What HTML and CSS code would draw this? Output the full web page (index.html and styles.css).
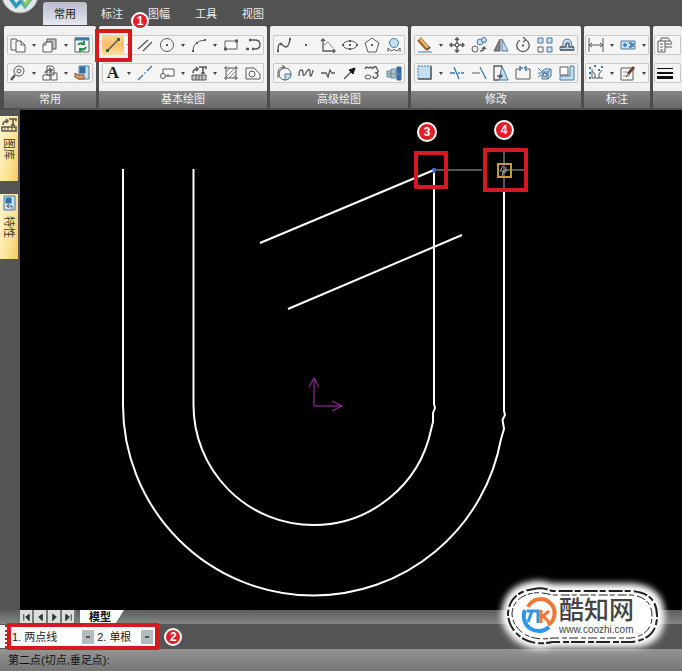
FILE: index.html
```html
<!DOCTYPE html>
<html lang="zh-CN">
<head>
<meta charset="utf-8">
<title>CAD</title>
<link rel="stylesheet" href="styles.css">
</head>
<body>
<header class="top">
  <svg class="app-logo" viewBox="0 0 38 14" aria-hidden="true"><circle cx="19" cy="-5" r="18" fill="#e4e7ea" stroke="#999"/><path d="M9-2l6 8 5-5 4 5 7-9" fill="none" stroke="#54b9a0" stroke-width="4"/><path d="M9-2l6 8 5-5" fill="none" stroke="#2c93c5" stroke-width="3"/><path d="M24 5l7-9" stroke="#9bc94c" stroke-width="3"/></svg>
  <nav class="tabs">
    <button class="tab active">常用</button><button class="tab">标注</button><button class="tab">图幅</button><button class="tab">工具</button><button class="tab">视图</button>
  </nav>
</header>

<section class="ribbon">
  <div class="panel">
    <div class="row">
      <button class="tool" aria-label="新建"><svg viewBox="0 0 16 16"><path d="M1 2h5l2 2v9H1z"/><path class="f" d="M6 4h5l4 4v7H6z"/><path d="M11 4v4h4"/></svg></button><i class="caret"></i>
      <button class="tool" aria-label="复制"><svg viewBox="0 0 16 16"><path class="shade" d="M5 5V2h9v10h-4V5z"/><path class="g" d="M8 5l2-3"/><path class="f" d="M1 7l3-2h6v10H1z"/><path d="M4 5v3H1"/></svg></button><i class="caret"></i>
      <button class="tool" aria-label="刷新"><svg viewBox="0 0 16 16"><path class="f" d="M1 1h14v14H1z"/><path class="bs" d="M1 2h14" stroke-width="3"/><path class="gr" d="M4 8q2-3 6-1M12 10q-2 4-6 2M10 4v3H7M6 15v-3h3"/></svg></button>
    </div>
    <div class="row">
      <button class="tool" aria-label="缩放"><svg viewBox="0 0 16 16"><circle cx="9" cy="6" r="5"/><circle cx="9" cy="6" r="2"/><path d="M5 10l-4 5" stroke-width="2.5"/></svg></button><i class="caret"></i>
      <button class="tool" aria-label="粘贴"><svg viewBox="0 0 16 16"><path class="f" d="M5 1h5l2 2v7H5zM1 10h7v5H1zM9 8h6v7H9z"/><path d="M3 8q1-3 6-3M7 3l3 2-3 3" stroke-width="1.5"/></svg></button><i class="caret"></i>
      <button class="tool" aria-label="特性刷"><svg viewBox="0 0 16 16"><path class="b" d="M5 1h10v13H5z"/><path class="deep" d="M6 2h5v6H6z"/><path class="hand" d="M1 8l3 2h6v4H4l-3-2z"/></svg></button>
    </div>
    <div class="caption">常用</div>
  </div>

  <div class="panel">
    <div class="row">
      <button class="tool selected" aria-label="直线"><svg viewBox="0 0 16 16"><path d="M2 14L14 2" stroke-width="1.6"/><path class="knob" d="M1 12h3v3H1zM12 1h3v3h-3z"/></svg></button><i class="caret"></i>
      <button class="tool" aria-label="平行线"><svg viewBox="0 0 16 16"><path d="M1 12L11 3M6 14l9-9" stroke-width="1.4"/></svg></button>
      <button class="tool" aria-label="圆"><svg viewBox="0 0 16 16"><circle cx="8" cy="8" r="6.5"/><path d="M7 8h2" stroke-width="2"/></svg></button><i class="caret"></i>
      <button class="tool" aria-label="圆弧"><svg viewBox="0 0 16 16"><path d="M2 14Q2 4 14 3"/><path d="M1 14h2M5 6h2M13 3h2" stroke-width="2"/></svg></button><i class="caret"></i>
      <button class="tool" aria-label="矩形"><svg viewBox="0 0 16 16"><path class="f" d="M2 4h12v8H2z"/><path d="M1 12h3M12 4h3" stroke-width="3"/></svg></button>
      <button class="tool" aria-label="多段线"><svg viewBox="0 0 16 16"><path d="M5 3h5q5 0 5 4.500t-5 4.500H8" stroke-width="1.4"/><path d="M4 3h2M1 12h3M7 12h2" stroke-width="2.500"/></svg></button>
    </div>
    <div class="row">
      <button class="tool" aria-label="文字"><b class="letter">A</b></button><i class="caret"></i>
      <button class="tool" aria-label="中心线"><svg viewBox="0 0 16 16"><path class="bs" d="M1 15l5-5M7.500 8.500l1-1M10 6l5-5" stroke-width="1.4"/></svg></button>
      <button class="tool" aria-label="轮廓"><svg viewBox="0 0 16 16"><path class="f" d="M4 4h11v7H6"/><circle cx="4" cy="11" r="2.5"/><path d="M4 4v5M9 9v3"/></svg></button><i class="caret"></i>
      <button class="tool" aria-label="图库"><svg viewBox="0 0 16 16"><path d="M2 8q0-4 4-4M5 2l2 2-2 2M8 2h7v2M12 2v7M10 8h4" stroke-width="1.6"/><path class="shade" d="M1 10h14v5H1z"/><path d="M5 10v5M8 10v5M11 10v5"/></svg></button><i class="caret"></i>
      <button class="tool" aria-label="剖面线"><svg viewBox="0 0 16 16"><path class="g" d="M3 7l4-4M3 12l9-9M6 13l7-7M10 13l3-3"/><path d="M3 1v14M13 1v14M1 3h14M1 13h14"/></svg></button>
      <button class="tool" aria-label="填充"><svg viewBox="0 0 16 16"><path d="M1 3h8l6 6v5H1z"/><circle cx="7" cy="9" r="3"/></svg></button>
    </div>
    <div class="caption">基本绘图</div>
  </div>

  <div class="panel">
    <div class="row">
      <button class="tool" aria-label="样条"><svg viewBox="0 0 16 16"><path d="M2 14C2 3 6 7 8 9s5 1 6-7" stroke-width="1.4"/><path d="M1 14h2M4 7h2M13 2h2" stroke-width="2.5"/></svg></button>
      <button class="tool" aria-label="点"><svg viewBox="0 0 16 16"><path d="M7 8h2" stroke-width="2"/></svg></button>
      <button class="tool" aria-label="公式曲线"><svg viewBox="0 0 16 16"><path d="M3 2v12h12M1 4l2-2 2 2M13 12l2 2-2 2" stroke-width="1.3"/><path class="g" d="M3 9l5-4 5 6"/></svg></button>
      <button class="tool" aria-label="椭圆"><svg viewBox="0 0 16 16"><ellipse cx="8" cy="8" rx="7" ry="4"/><path d="M7 4h2M7 12h2M7 8h2M0 8h2M14 8h2" stroke-width="2"/></svg></button>
      <button class="tool" aria-label="多边形"><svg viewBox="0 0 16 16"><path d="M8 1l7 5-3 9H4L1 6z"/><path d="M7 8h2" stroke-width="2"/></svg></button>
      <button class="tool" aria-label="圆孔"><svg viewBox="0 0 16 16"><circle class="b" cx="8" cy="6" r="4.5"/><path d="M2 15v-4l3 3q3-3 6 0l3-3v4"/></svg></button>
    </div>
    <div class="row">
      <button class="tool" aria-label="局部放大"><svg viewBox="0 0 16 16"><circle cx="9" cy="9" r="6"/><path class="b" d="M9 9h6q0 5-6 6z"/><path d="M2 7q1-5 6-5M6 0l3 2-3 2M2 7v6"/></svg></button>
      <button class="tool" aria-label="波浪线"><svg viewBox="0 0 16 16"><path d="M1 11Q1 5 3 5t2 3 1.500 2T8 8t2-3 2 3 1.500 2T15 5" stroke-width="1.300"/></svg></button>
      <button class="tool" aria-label="折断线"><svg viewBox="0 0 16 16"><path d="M1 8h5l2 4 2-7 2 3h3" stroke-width="1.3"/></svg></button>
      <button class="tool" aria-label="箭头"><svg viewBox="0 0 16 16"><path d="M2 14l8-8" stroke-width="1.500"/><path class="ink" d="M13 3L7 5l4 4z"/></svg></button>
      <button class="tool" aria-label="云线"><svg viewBox="0 0 16 16"><path d="M1 4q1-3 4-1 2-2 4 1M9 3q3-3 4 1 3 3-1 4 4 2 0 5-3 1-3-2" stroke-width="1.4"/><ellipse cx="4" cy="12" rx="3" ry="2"/></svg></button>
      <button class="tool" aria-label="孔轴"><svg viewBox="0 0 16 16"><path class="bar" d="M1 6h4v6H1z"/><path class="bar" d="M5 4h5v9H5z"/><path class="deep" d="M11 2h4v13h-4z"/><path class="g" d="M1 9h14"/></svg></button>
    </div>
    <div class="caption">高级绘图</div>
  </div>

  <div class="panel">
    <div class="row">
      <button class="tool" aria-label="删除"><svg viewBox="0 0 16 16"><path class="wood" d="M2 2l9 10"/><path class="shine" d="M3 2l8 9"/><path d="M10 13l3-3" stroke-width="2"/><path class="bs" d="M1 15h14"/></svg></button><i class="caret"></i>
      <button class="tool" aria-label="平移"><svg viewBox="0 0 16 16"><path d="M8 1v14M1 8h14M6 3l2-2 2 2M6 13l2 2 2-2M3 6L1 8l2 2M13 6l2 2-2 2" stroke-width="1.5"/><path class="f" d="M6.500 6.500h3v3h-3z"/></svg></button>
      <button class="tool" aria-label="平移复制"><svg viewBox="0 0 16 16"><circle class="b" cx="9" cy="5" r="3"/><circle class="b" cx="13" cy="3" r="2.5"/><circle cx="4" cy="12" r="3"/><path d="M9 14q4 0 4-3M11 12l2-2 2 2" stroke-width="1.4"/></svg></button>
      <button class="tool" aria-label="镜像"><svg viewBox="0 0 16 16"><path class="slate" d="M7 2v12H1z"/><path class="b" d="M9 2v12h6z"/></svg></button>
      <button class="tool" aria-label="旋转"><svg viewBox="0 0 16 16"><path d="M5 3a6.200 6.200 0 1 0 6 0M8 0l3 3-3 2" stroke-width="1.300"/><path d="M7 8.500h2" stroke-width="2"/></svg></button>
      <button class="tool" aria-label="阵列"><svg viewBox="0 0 16 16"><path class="b" d="M1 1h5v5H1zM10 1h5v5h-5zM10 10h5v5h-5z"/><path class="f" d="M1 10h5v5H1z"/></svg></button>
      <button class="tool" aria-label="等距线"><svg viewBox="0 0 16 16"><path class="b" d="M1 13v-3h3q-1-8 4-8t5 8h2v3z"/><path d="M1 10h6V7q2-2 3 0v3h5M1 13h14" stroke-width="1.4"/></svg></button>
    </div>
    <div class="row">
      <button class="tool" aria-label="裁剪"><svg viewBox="0 0 16 16"><path class="b" d="M1 1h13v13H1z" stroke-dasharray="2 1"/><path d="M14 1v13H1" stroke-width="1.5"/></svg></button><i class="caret"></i>
      <button class="tool" aria-label="打断"><svg viewBox="0 0 16 16"><path class="bs" d="M1 8h5M9 8h2M12 8h3M5 2l5 12" stroke-width="1.300"/></svg></button>
      <button class="tool" aria-label="延伸"><svg viewBox="0 0 16 16"><path d="M1 8h8"/><path class="bs" d="M9 2l6 12" stroke-width="1.300"/></svg></button>
      <button class="tool" aria-label="拉伸"><svg viewBox="0 0 16 16"><path class="b" d="M9 1l6 14H6z"/><path d="M9 1H1v14h5" stroke-width="1.300"/><path d="M4 11h5M7 9l2 2-2 2" stroke-width="1.5"/></svg></button>
      <button class="tool" aria-label="断开"><svg viewBox="0 0 16 16"><path d="M4 4H1v10h14V4h-3"/><path class="bs" d="M5 1v5M8 3H5M11 1v5M9 3h2" stroke-width="1.500"/></svg></button>
      <button class="tool" aria-label="分解"><svg viewBox="0 0 16 16"><path class="b" d="M5 6l3-2h6v7l-3 3H5z"/><path class="bs" d="M5 7h6v7M11 7l3-3M1 3l3 3M1 8h3M1 12l3-2"/><circle cx="8" cy="10" r="2"/></svg></button>
      <button class="tool" aria-label="比例"><svg viewBox="0 0 16 16"><path class="b" d="M1 11h10V1h4v14H1z"/><path class="f" d="M1 2h8v8H1z"/></svg></button>
    </div>
    <div class="caption">修改</div>
  </div>

  <div class="panel compact">
    <div class="row">
      <button class="tool" aria-label="尺寸标注"><svg viewBox="0 0 16 16"><path d="M1 1v14M15 1v14M1 8h14M4 6L1 8l3 2M12 6l3 2-3 2"/></svg></button><i class="caret"></i>
      <button class="tool" aria-label="公差"><svg viewBox="0 0 16 16"><path class="b" d="M1 4h14v8H1z"/><path class="bs" d="M3 8h4M5 6v4M9 6h2v4H9M13 6v4" stroke-width="1.6"/></svg></button><i class="caret"></i>
    </div>
    <div class="row">
      <button class="tool" aria-label="坐标标注"><svg viewBox="0 0 16 16"><path d="M4 4v9h11M7 13V9L4 6M11 13V9l3-4"/><path class="bs" d="M1 3h2M6 1h2M13 2h2M1 8h2M1 13h2M10 5h2" stroke-width="2"/></svg></button><i class="caret"></i>
      <button class="tool" aria-label="标注编辑"><svg viewBox="0 0 16 16"><path class="f" d="M1 3h12v12H1z"/><path class="g" d="M3 7h4M3 11h7"/><path class="brush" d="M8 9l6-7"/><path d="M6 12l2-3"/></svg></button><i class="caret"></i>
    </div>
    <div class="caption">标注</div>
  </div>

  <div class="panel compact last">
    <div class="row">
      <button class="tool" aria-label="图层"><svg viewBox="0 0 16 16"><path class="f" d="M1 4h7v11H1z"/><path d="M3 7h3M3 10h3M3 13h3M4 4V1h7M8 4h5M8 7h7M8 10h7M11 1l4 5"/></svg></button>
    </div>
    <div class="row">
      <button class="tool" aria-label="线宽"><svg viewBox="0 0 16 16"><path class="ink" d="M0 3.500h16"/><path class="ink" d="M0 8h16" stroke-width="2"/><path class="ink" d="M0 12.500h16" stroke-width="3"/></svg></button>
    </div>
    <div class="caption"></div>
  </div>
  <span class="mark mark-line"></span>
  <span class="badge badge-one">1</span>
</section>

<main class="work">
  <aside class="side">
    <button class="side-tab"><svg viewBox="0 0 16 16"><path d="M2 8q0-4 4-4M5 2l2 2-2 2M8 2h7v2M12 2v7M10 8h4M1 10h14v4H1z" stroke-width="1.6"/><path d="M4 10v4M7 10v4M11 10v4"/></svg><span>图库</span></button>
    <button class="side-tab"><svg viewBox="0 0 16 16"><path class="b" d="M3 1h11v14H3z"/><path class="deep" d="M5 3h5v5H5z"/><path d="M6 11h5v3M8 9l-2 2 2 2"/></svg><span>特性</span></button>
  </aside>
  <svg class="drawing" role="img" aria-label="绘图区">
    <g transform="translate(-20 -110)">
      <g class="geometry">
        <path d="M123 169V405A190.500 190.500 0 0 0 313.500 595.500A190.500 190.500 0 0 0 501 439L504 429L502.500 420L505 415L504 411V191"/>
        <path d="M193.500 169V405A120 120 0 0 0 313.500 525A120 120 0 0 0 431 430L433 422V413L435 408L434 404V170"/>
        <path d="M260 243L434 170M288 309L462 235"/>
      </g>
      <path class="guide" d="M434 170H482M504 150V190M504 170H526"/>
      <path class="axis" d="M314 379V406H342M309 387l5-9 5 9M332 401l10 5-10 5"/>
      <path d="M434 168v5" stroke="#4863d7" stroke-width="3"/>
      <path class="snap" d="M498 164h13v13h-13z"/>
      <path class="guide" d="M503 166l-3 5h4M506 167v5h-3l-1 4"/>
      <path class="box" d="M416 153h30v34h-30zM485 150h41v40h-41z"/>
      <g class="pin"><circle cx="427" cy="132" r="9"/><circle cx="504" cy="130" r="9"/></g>
      <g class="pin-text"><text x="427" y="136">3</text><text x="504" y="134">4</text></g>
    </g>
  </svg>
</main>

<footer class="bottom">
  <div class="sheets">
    <button class="step" aria-label="首页"><svg viewBox="0 0 12 12"><path d="M3 3v7M9 3L5 6l4 4z" fill="#333"/></svg></button><button class="step" aria-label="上一页"><svg viewBox="0 0 12 12"><path d="M8 3L4 6l4 4z" fill="#333"/></svg></button><button class="step" aria-label="下一页"><svg viewBox="0 0 12 12"><path d="M4 3l4 3-4 4z" fill="#333"/></svg></button><button class="step" aria-label="末页"><svg viewBox="0 0 12 12"><path d="M3 3l4 3-4 4zM9 3v7" fill="#333"/></svg></button>
    <button class="sheet">模型</button>
  </div>
  <div class="options">
    <span class="grip"></span>
    <div class="fields">
      <label for="mode">1.</label><span class="pick pick-wide"><select id="mode"><option>两点线</option></select></span>
      <label for="chain">2.</label><span class="pick"><select id="chain"><option>单根</option></select></span>
    </div>
    <span class="badge">2</span>
  </div>
  <div class="status">第二点(切点,垂足点):</div>
  <div class="stamp">
    <svg class="stamp-frame" viewBox="0 0 180 84" aria-hidden="true">
      <defs><filter id="soft" x="-10%" y="-20%" width="120%" height="140%"><feGaussianBlur stdDeviation="3"/></filter></defs>
      <path d="M40 10Q48 8 60 12H140Q170 14 170 42T140 71H60Q42 76 28 67Q12 56 12 40Q14 14 40 10z" fill="#fff" stroke="#fff" stroke-width="5" filter="url(#soft)"/>
      <g fill="none" stroke="#222">
        <path d="M42 15Q50 13 60 17H140Q165 19 165 42T140 68H60Q43 72 30 64Q16 54 16 39Q18 18 42 15z" stroke-width="2" stroke-dasharray="14 2 6 3"/>
        <path d="M42 19Q50 18 60 21H139Q160 23 160 42T139 64H60Q45 67 32 60Q20 51 20 39Q22 22 42 19z" stroke-width="1" stroke-dasharray="5 3 9 2"/>
      </g>
      <g fill="none">
        <path d="M36 33A14 14 0 1 1 56 51" stroke="#ef7837" stroke-width="4"/>
        <path d="M33 36A15 15 0 0 0 57 53" stroke="#3095e9" stroke-width="4"/>
        <path d="M35 37H46V49M40 37L36 48" stroke="#3095e9" stroke-width="3"/>
        <path d="M49 36V49M57 37L51 42L58 49" stroke="#ef7837" stroke-width="3"/>
      </g>
    </svg>
    <div class="stamp-text"><strong>酷知网</strong><span>www.coozhi.com</span></div>
  </div>
</footer>
</body>
</html>
```
FILE: styles.css
```css
* { box-sizing: border-box; }
body {
  margin: 0;
  height: 100vh;
  display: flex;
  flex-direction: column;
  overflow: hidden;
  background: #525252;
  font-family: "Liberation Sans", "Noto Sans CJK SC", sans-serif;
  font-size: 11px;
  line-height: 16px;
}
button {
  border: 0;
  padding: 0;
  background: none;
  font: inherit;
  color: inherit;
}
svg { display: block; }

.top { display: flex; height: 25px; padding-left: 1px; }
.app-logo { width: 38px; height: 14px; }
.tabs { display: flex; gap: 3px; padding: 2px 0 0 4px; }
.tab { padding: 0 11px; color: #eee; border-radius: 3px 3px 0 0; }
.tab.active { background: linear-gradient(#b8bbcb, #e6e8f2); color: #222; }

.ribbon {
  position: relative;
  display: flex;
  gap: 3px;
  padding: 1px 0 2px 4px;
  background: #4d4d4d;
}
.panel {
  flex: none;
  display: flex;
  flex-direction: column;
  gap: 8px;
  padding: 9px 3px 0;
  background: #f0f0f0;
  border-radius: 2px;
}
.compact { padding: 9px 1px 0; }
.last { flex: 1 0 auto; }
.row {
  display: flex;
  align-items: center;
  height: 20px;
  border-radius: 2px;
  background: #f5f5f5;
  box-shadow: inset 0 0 0 1px #c9c9c9;
}
.tool {
  display: grid;
  place-items: center;
  width: 22px;
  height: 20px;
}
.tool svg { width: 16px; height: 16px; }
.tool.selected { background: linear-gradient(#fbd79b, #f8bd68 50%, #fde0a4); }
.letter { font: bold 17px/18px "Liberation Serif", serif; color: #222; }
.tool path, .tool circle, .tool ellipse, .side-tab path {
  fill: none;
  stroke: #5a5a5a;
}
.tool .f { fill: #fafafa; }
.tool .g { stroke: #8b8b8b; }
.tool .shade { fill: #c4c4c4; }
.tool .b, .side-tab .b { fill: #c2e0f2; stroke: #4a7b9c; }
.tool .bs { stroke: #3979ae; }
.tool .gr { stroke: #26914c; stroke-width: 2; }
.tool .knob { fill: #3c6b35; stroke: none; }
.tool .deep, .side-tab .deep { fill: #376da6; stroke: #376da6; }
.tool .hand { fill: #db9a67; stroke: #8e5635; }
.tool .ink { fill: #111; stroke: #111; }
.tool .bar { fill: #a9c3d6; stroke: #6d8ba0; }
.tool .slate { fill: #7a828b; }
.tool .wood { stroke: #9c6329; stroke-width: 5; }
.tool .shine { stroke: #f0c163; stroke-width: 2; }
.tool .brush { stroke: #724334; stroke-width: 3; }
.caret { width: 10px; height: 20px; display: grid; place-items: center; }
.caret::after {
  content: "";
  border: 2px solid transparent;
  border-top: 3px solid #444;
  border-bottom: 0;
}
.caption {
  height: 17px;
  margin: 0 -3px;
  background: linear-gradient(#858585, #686868);
  color: #f4f4f4;
  text-align: center;
}
.compact .caption { margin: 0 -1px; }
.mark {
  position: absolute;
  border: 4px solid #d51920;
}
.mark-line { left: 95px; top: 4px; width: 37px; height: 33px; }
.badge {
  width: 18px;
  height: 18px;
  border: 2px solid #fff;
  border-radius: 50%;
  background: #df2027;
  color: #fff;
  font-size: 12px;
  font-weight: bold;
  line-height: 14px;
  text-align: center;
}
.badge-one { position: absolute; left: 131px; top: -13px; }

.work { flex: 1; display: flex; min-height: 0; background: #000; }
.side {
  flex: none;
  width: 20px;
  display: flex;
  flex-direction: column;
  gap: 13px;
  padding: 6px 2px 0 0;
  background: #555;
}
.side-tab {
  display: flex;
  flex-direction: column;
  align-items: center;
  gap: 5px;
  height: 65px;
  padding-top: 1px;
  background: linear-gradient(100deg, #fff6d2, #fbe496 60%, #f3c95c);
  color: #443c28;
}
.side-tab svg { width: 16px; height: 16px; }
.side-tab span { writing-mode: vertical-rl; text-orientation: sideways; }
.drawing { flex: 1; min-width: 0; height: 100%; overflow: hidden; }
.geometry { fill: none; stroke: #fff; stroke-width: 2; }
.guide { fill: none; stroke: #aaa; }
.axis { fill: none; stroke: #b22bb5; }
.snap { fill: none; stroke: #c49a35; stroke-width: 2; }
.box { fill: none; stroke: #d51920; stroke-width: 4; }
.pin { fill: #df2027; stroke: #fff; stroke-width: 2; }
.pin-text { fill: #fff; font-size: 12px; font-weight: bold; text-anchor: middle; }

.bottom { position: relative; }
.sheets {
  display: flex;
  height: 14px;
  padding-left: 20px;
  background: linear-gradient(#5d5d5d, #858585);
}
.step {
  width: 14px;
  height: 14px;
  padding: 1px;
  border-right: 2px solid #777;
  background: #ddd;
}
.step svg { width: 11px; height: 12px; }
.step path { stroke: #333; }
.sheet {
  width: 44px;
  padding-right: 4px;
  margin-left: 4px;
  overflow: hidden;
  clip-path: polygon(0 0, 100% 0, 80% 100%, 0 100%);
  background: #fff;
  color: #111;
  font-weight: bold;
  line-height: 14px;
}
.options { display: flex; align-items: center; height: 25px; background: #555; }
.grip {
  width: 7px;
  height: 23px;
  background: #f2f2f2;
  border-right: 2px dotted #b22;
}
.fields {
  display: flex;
  align-items: center;
  gap: 3px;
  height: 27px;
  padding: 0 2px 0 1px;
  border: 4px solid #d51920;
  background: #f6f6f6;
  color: #222;
  z-index: 1;
}
.pick { display: flex; position: relative; width: 44px; }
.pick-wide { width: 70px; }
.pick::after {
  content: "";
  position: absolute;
  right: 0;
  top: 1px;
  width: 12px;
  height: 14px;
  background: linear-gradient(#555, #555) center / 4px 2px no-repeat #b3bbc0;
  pointer-events: none;
}
.pick select {
  appearance: none;
  width: 100%;
  height: 16px;
  padding: 0;
  border: 0;
  background: #fff;
  color: #222;
  font: inherit;
}
.options .badge { margin-left: 5px; }
.status {
  height: 22px;
  padding: 3px 8px;
  background: linear-gradient(#949494, #777);
  color: #111;
}
.stamp {
  position: absolute;
  right: 10px;
  bottom: 13px;
  width: 180px;
  height: 84px;
  z-index: 2;
}
.stamp-frame { width: 180px; height: 84px; }
.stamp-text {
  position: absolute;
  left: 67px;
  top: 22px;
  display: flex;
  flex-direction: column;
  color: #444;
}
.stamp-text strong { font-size: 25px; line-height: 28px; font-weight: 500; }
.stamp-text span { font-size: 10px; line-height: 12px; }
```
